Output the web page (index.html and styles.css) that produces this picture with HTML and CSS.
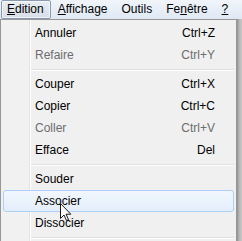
FILE: index.html
```html
<!DOCTYPE html>
<html>
<head>
  <title>Edition</title>
  <link rel="stylesheet" href="styles.css">
</head>
<body>
  <div class="menubar">
    <span class="bar-item active"><u>E</u>dition</span>
    <span class="bar-item"><u>A</u>ffichage</span>
    <span class="bar-item">Outils</span>
    <span class="bar-item">Fe<u>n</u>être</span>
    <span class="bar-item"><u>?</u></span>
  </div>
  <div class="stage">
    <div class="dropdown">
      <div class="item"><span>Annuler</span><span class="key">Ctrl+Z</span></div>
      <div class="item disabled"><span>Refaire</span><span class="key">Ctrl+Y</span></div>
      <div class="sep"></div>
      <div class="item"><span>Couper</span><span class="key">Ctrl+X</span></div>
      <div class="item"><span>Copier</span><span class="key">Ctrl+C</span></div>
      <div class="item disabled"><span>Coller</span><span class="key">Ctrl+V</span></div>
      <div class="item"><span>Efface</span><span class="key">Del</span></div>
      <div class="sep"></div>
      <div class="item"><span>Souder</span></div>
      <div class="item hover"><span>Associer</span></div>
      <div class="item"><span>Dissocier</span></div>
      <div class="sep"></div>
    </div>
    <div class="shadow"></div>
    <!-- mouse pointer over "Associer" -->
    <svg class="cursor" width="12" height="19" viewBox="0 0 12 19">
      <path d="M0.5 0.5 L0.5 15.5 L4 12 L6.5 17.5 L8.5 16.5 L6 11.2 L10.8 11.2 Z" fill="#fff" stroke="#1a1a1a" stroke-width="1"/>
    </svg>
  </div>
</body>
</html>
```

FILE: styles.css
```css
/* Windows 7 style menu */
body {
  margin: 0;
  width: 242px;
  height: 241px;
  overflow: hidden;
  font-family: "Liberation Sans", Arial, sans-serif;
  font-size: 12px;
  color: #000;
  background-color: #d6d6d6;
}
.menubar {
  display: flex;
  height: 19px;
  align-items: stretch;
  background: linear-gradient(#f1f5fb, #dfe8f4);
}
.bar-item {
  display: flex;
  align-items: center;
  padding: 0 6px;
  line-height: 17px;
  border: 1px solid transparent;
}
.bar-item.active {
  margin-left: 1px;
  padding: 0 6px 0 5px;
  border-color: #8a9bb0;
  border-radius: 2px;
  background: linear-gradient(#e8edf3, #d7dee7);
  box-shadow: inset 0 0 0 1px rgba(255, 255, 255, 0.6);
}
.stage {
  position: relative;
  display: flex;
  height: 222px;
}
.dropdown {
  width: 232px;
  padding: 2px;
  border: 1px solid #979797;
  border-bottom: none;
  background: linear-gradient(to right, #f1f1f1 28px, #e2e3e3 28px, #e2e3e3 29px, #ffffff 29px, #ffffff 30px, #f0f0f0 30px);
}
.shadow {
  width: 5px;
  background: linear-gradient(to right, #8f8f8f, #b5b5b5 2px, #c8c8c8);
}
.item {
  display: flex;
  justify-content: space-between;
  align-items: center;
  height: 22px;
  padding: 0 18px 0 31px;
  border: 1px solid transparent;
  box-sizing: border-box;
}
.item.disabled {
  color: #6d6d6d;
}
.item.hover {
  border-color: #aecff7;
  border-radius: 3px;
  background: linear-gradient(#f2f7fe, #e3eefc);
}
.sep {
  height: 7px;
  margin-left: 28px;
  background: linear-gradient(#f0f0f0 3px, #e0e0e0 3px, #e0e0e0 4px, #ffffff 4px, #ffffff 5px, #f0f0f0 5px);
}
.cursor {
  position: absolute;
  left: 60px;
  top: 184px;
}
```
